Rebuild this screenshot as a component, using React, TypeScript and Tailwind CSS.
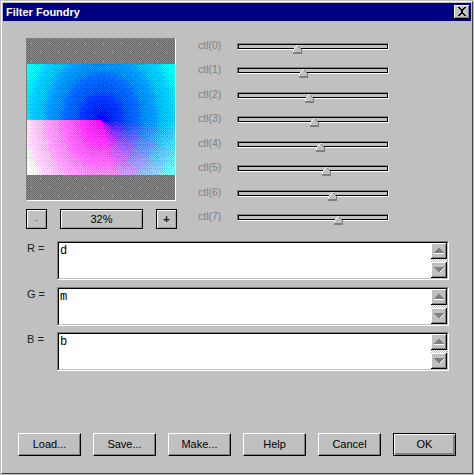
import React, { useMemo } from 'react';

const BAYER = [
  [0, 8, 2, 10],
  [12, 4, 14, 6],
  [3, 11, 1, 9],
  [15, 7, 13, 5],
];

const WIDTH = 148;
const STRIP = 25;
const IMAGE = 111;

function quantize(v: number, x: number, y: number) {
  const t = (BAYER[y % 4][x % 4] + 0.5) / 16;
  return Math.min(255, Math.floor(v / 51 + t) * 51);
}

// preview is the dithered R=d G=m B=b result, built as one path per palette colour
function buildPreview() {
  const paths: Record<string, string> = {};
  const cx = 74;
  const cy = 56;
  for (let y = 0; y < IMAGE; y++) {
    for (let x = 0; x < WIDTH; x++) {
      const dx = x - cx;
      const dy = y - cy;
      const g = Math.min(255, Math.sqrt(dx * 3 * (dx * 3) + dy * 2.5 * (dy * 2.5)));
      let r = 0;
      if (dy >= 0) {
        const angle = (Math.atan2(dy, dx) * 180) / Math.PI;
        r = Math.min(255, (angle / 82) * 255);
      }
      const key = `rgb(${quantize(r, x, y)},${quantize(g, x, y)},255)`;
      paths[key] = (paths[key] || '') + `M${x} ${y + STRIP}h1v1h-1z`;
    }
  }
  return paths;
}

function buildChecker() {
  let dark = '';
  let dots = '';
  for (let y = 0; y < STRIP * 2 + IMAGE; y++) {
    if (y >= STRIP && y < STRIP + IMAGE) continue;
    for (let x = 0; x < WIDTH; x++) {
      if ((x + y) % 2 === 0) dark += `M${x} ${y}h1v1h-1z`;
      if (x % 9 === 4 && y % 9 === 4) dots += `M${x} ${y}h1v1h-1z`;
    }
  }
  return { dark, dots };
}

function Preview() {
  const paths = useMemo(buildPreview, []);
  const checker = useMemo(buildChecker, []);
  return (
    <div className="w-[150px] h-[163px] border border-t-[#808080] border-l-[#808080] border-r-white border-b-white">
      <svg width={148} height={161} viewBox="0 0 148 161" shapeRendering="crispEdges" className="block">
        <rect x={0} y={0} width={148} height={25} fill="#8c8c8c" />
        <rect x={0} y={136} width={148} height={25} fill="#8c8c8c" />
        <path d={checker.dark} fill="#666666" />
        <path d={checker.dots} fill="#b0b0b0" />
        {Object.entries(paths).map(([color, d]) => (
          <path key={color} d={d} fill={color} />
        ))}
      </svg>
    </div>
  );
}

function Thumb({ left }: { left: number }) {
  return (
    <svg width={9} height={9} viewBox="0 0 9 9" shapeRendering="crispEdges" className="absolute top-[1px]" style={{ left }}>
      <path d="M4 0h1v1h1v1h1v1h1v1h1v5H0V4h1V3h1V2h1V1h1z" fill="#808080" />
      <path d="M4 1h1v1h1v1h1v1h1v3H1V4h1V3h1V2h1z" fill="#c0c0c0" />
      <path d="M4 0h1v1H4v1H3v1H2v1H1v3H0V4h1V3h1V2h1V1h1z" fill="#ffffff" />
    </svg>
  );
}

function SliderRow({ label, pos }: { label: string; pos: number }) {
  return (
    <div className="flex h-[14px] items-start">
      <span className="w-[39px] text-[10.5px] leading-[14px] text-[#808080]">{label}</span>
      <div className="relative w-[152px] mt-[5px] h-[7px] border border-t-[#808080] border-l-[#808080] border-r-white border-b-white">
        <div className="h-[5px] border border-black bg-[#c0c0c0]" />
        <Thumb left={pos - 5} />
      </div>
    </div>
  );
}

function ZoomButton({ children, className }: { children: React.ReactNode; className: string }) {
  return (
    <div className={`h-[20px] flex items-center justify-center border border-black shadow-[inset_1px_1px_0_#ffffff,inset_-1px_-1px_0_#a0a0a0] text-[11px] ${className}`}>
      {children}
    </div>
  );
}

function SpinButton({ down }: { down?: boolean }) {
  return (
    <div className="h-[16px] w-[16px] flex items-center justify-center bg-[#c0c0c0] border-r border-b border-r-black border-b-black shadow-[inset_1px_1px_0_#ffffff,inset_-1px_-1px_0_#808080]">
      <svg width={10} height={6} viewBox="0 0 10 6" shapeRendering="crispEdges">
        {down ? (
          <>
            <path d="M0 0h10v1h-1v1h-1v1h-1v1h-1v1h-2v-1h-1v-1h-1v-1h-1v-1H0z" fill="#808080" />
            <path d="M9 1h1v1h-1zM8 2h1v1h-1zM7 3h1v1h-1zM6 4h1v1h-1z" fill="#ffffff" />
          </>
        ) : (
          <>
            <path d="M4 0h2v1h1v1h1v1h1v1h1v1H0V4h1V3h1V2h1V1h1z" fill="#808080" />
            <path d="M0 5h10v1H0z" fill="#ffffff" />
          </>
        )}
      </svg>
    </div>
  );
}

function ExprRow({ label, value, className }: { label: string; value: string; className: string }) {
  return (
    <div className={`flex ml-[23px] ${className}`}>
      <span className="w-[31px] pl-[1px] text-[11px] leading-[14px] text-[#202020]">{label}</span>
      <div className="w-[392px] h-[39px] flex border border-t-[#808080] border-l-[#808080] border-r-white border-b-white">
        <div className="flex-1 flex border border-t-black border-l-black border-r-[#c0c0c0] border-b-[#c0c0c0] bg-white">
          <div className="flex-1 pl-[1px] pt-[1px] text-[12px] leading-[14px] text-black font-['Liberation_Mono',monospace]">{value}</div>
          <div className="w-[16px] flex flex-col">
            <SpinButton />
            <div className="h-[3px] bg-[repeating-conic-gradient(#ffffff_0_25%,#c0c0c0_0_50%)] bg-[length:2px_2px]" />
            <SpinButton down />
          </div>
        </div>
      </div>
    </div>
  );
}

function PushButton({ label, primary }: { label: string; primary?: boolean }) {
  return (
    <button
      className={
        primary
          ? 'w-[63px] h-[23px] text-[11px] text-black border border-black shadow-[inset_1px_1px_0_#ffffff,inset_-2px_-2px_0_#808080]'
          : 'w-[63px] h-[23px] text-[11px] text-black border border-t-white border-l-white border-r-black border-b-black shadow-[inset_-1px_-1px_0_#808080]'
      }
    >
      {label}
    </button>
  );
}

const SLIDERS = [60, 66, 72, 77, 83, 89, 95, 101];

export default function App() {
  return (
    <div className="w-[474px] h-[475px] bg-[#c0c0c0] p-[1px] font-['Liberation_Sans',Arial,sans-serif]">
      <div className="h-full border border-t-white border-l-white border-r-[#404040] border-b-[#404040] p-[1px]">
        {/* Title bar */}
        <div className="h-[18px] bg-[#000080] flex items-center justify-between pl-[3px] pr-[1px]">
          <span className="text-white text-[11px] font-bold">Filter Foundry</span>
          <div className="w-[16px] h-[14px] flex items-center justify-center bg-[#c0c0c0] border-r border-b border-r-black border-b-black shadow-[inset_1px_1px_0_#ffffff,inset_-1px_-1px_0_#808080]">
            <svg width={10} height={9} viewBox="0 0 10 9" shapeRendering="crispEdges">
              <path d="M1 0h2v1h1v1h2V1h1V0h2v1H8v1H7v1H6v3h1v1h1v1h1v1H7V8H6V7H4v1H3v1H1V8h1V7h1V6h1V3H3V2H2V1H1z" fill="#000000" />
            </svg>
          </div>
        </div>

        {/* Preview and sliders */}
        <div className="flex ml-[23px] mt-[17px]">
          <div className="w-[172px] shrink-0">
            <Preview />
            <div className="flex gap-[13px] mt-[8px]">
              <ZoomButton className="w-[21px] text-[#808080]">-</ZoomButton>
              <ZoomButton className="w-[83px] text-black">32%</ZoomButton>
              <ZoomButton className="w-[21px] text-black font-bold">+</ZoomButton>
            </div>
          </div>
          <div className="flex flex-col gap-[10.43px]">
            {SLIDERS.map((pos, i) => (
              <SliderRow key={i} label={`ctl(${i})`} pos={pos} />
            ))}
          </div>
        </div>

        {/* Expressions */}
        <ExprRow label="R =" value="d" className="mt-[12px]" />
        <ExprRow label="G =" value="m" className="mt-[7px]" />
        <ExprRow label="B =" value="b" className="mt-[6px]" />

        {/* Buttons */}
        <div className="flex gap-[12px] ml-[15px] mt-[62px]">
          <PushButton label="Load..." />
          <PushButton label="Save..." />
          <PushButton label="Make..." />
          <PushButton label="Help" />
          <PushButton label="Cancel" />
          <PushButton label="OK" primary />
        </div>
      </div>
    </div>
  );
}
